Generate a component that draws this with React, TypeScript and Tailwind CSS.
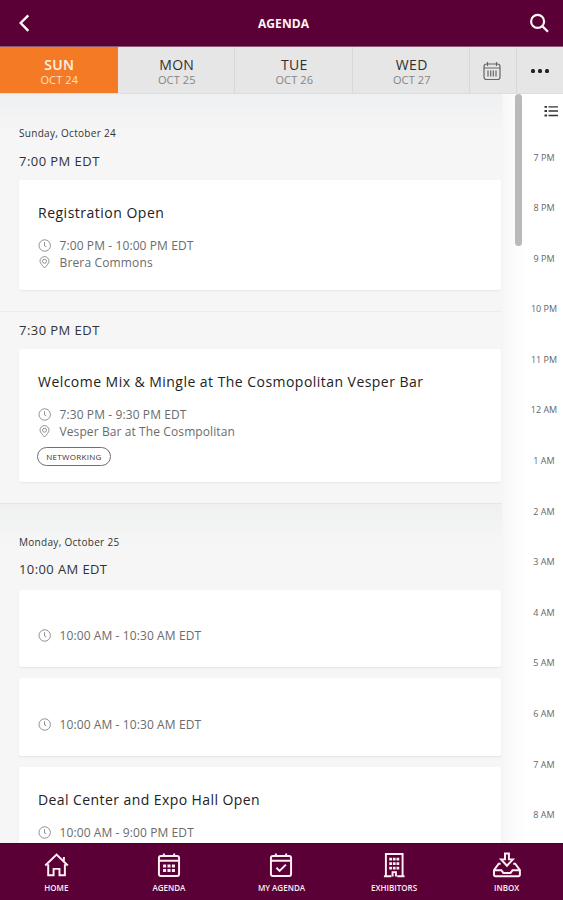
import React from 'react';

interface Session {
  title?: string;
  titleClass?: string;
  time: string;
  timeClass: string;
  location?: string;
  locationClass?: string;
  tag?: string;
  cardClass: string;
}

interface Slot {
  time: string;
  timeClass: string;
  slotClass: string;
  sessions: Session[];
}

interface Day {
  date: string;
  slots: Slot[];
}

const tabs = [
  { day: 'SUN', date: 'OCT 24', active: true },
  { day: 'MON', date: 'OCT 25' },
  { day: 'TUE', date: 'OCT 26' },
  { day: 'WED', date: 'OCT 27' },
];

const hours = [
  '7 PM', '8 PM', '9 PM', '10 PM', '11 PM', '12 AM', '1 AM',
  '2 AM', '3 AM', '4 AM', '5 AM', '6 AM', '7 AM', '8 AM',
];

const days: Day[] = [
  {
    date: 'Sunday, October 24',
    slots: [
      {
        time: '7:00 PM EDT',
        timeClass: 'mb-[9px] tracking-[0.45px]',
        slotClass: 'pt-[9px] pb-[21px]',
        sessions: [
          {
            title: 'Registration Open',
            titleClass: 'tracking-[0.5px]',
            time: '7:00 PM - 10:00 PM EDT',
            timeClass: 'tracking-[0.1px]',
            location: 'Brera Commons',
            locationClass: 'tracking-[0.15px]',
            cardClass: 'h-[110px] pt-[23px]',
          },
        ],
      },
      {
        time: '7:30 PM EDT',
        timeClass: 'mb-[9px] tracking-[0.45px]',
        slotClass: 'border-t border-[#ececec] pt-[8px] pb-[21px]',
        sessions: [
          {
            title: 'Welcome Mix & Mingle at The Cosmopolitan Vesper Bar',
            titleClass: 'tracking-[0.46px]',
            time: '7:30 PM - 9:30 PM EDT',
            timeClass: 'tracking-[0.1px]',
            location: 'Vesper Bar at The Cosmpolitan',
            locationClass: 'tracking-[0.1px]',
            tag: 'NETWORKING',
            cardClass: 'h-[133px] pt-[23px]',
          },
        ],
      },
    ],
  },
  {
    date: 'Monday, October 25',
    slots: [
      {
        time: '10:00 AM EDT',
        timeClass: 'mb-[11px] tracking-[0.4px]',
        slotClass: 'pt-[8px] pb-[21px]',
        sessions: [
          { time: '10:00 AM - 10:30 AM EDT', timeClass: 'tracking-[0.1px]', cardClass: 'h-[77px] pt-[37px]' },
          { time: '10:00 AM - 10:30 AM EDT', timeClass: 'tracking-[0.1px]', cardClass: 'h-[78px] pt-[38px]' },
          {
            title: 'Deal Center and Expo Hall Open',
            titleClass: 'tracking-[0.42px]',
            time: '10:00 AM - 9:00 PM EDT',
            timeClass: 'tracking-[0.1px]',
            cardClass: 'h-[110px] pt-[23px]',
          },
        ],
      },
    ],
  },
];

const ClockIcon = () => (
  <svg className="h-[13px] w-[13px] shrink-0" viewBox="0 0 13 13" fill="none" stroke="#858585" strokeWidth="0.9">
    <circle cx="6.7" cy="6.5" r="5.7" />
    <path d="M6.5 3.2v3.7l1.8.9" />
  </svg>
);

const PinIcon = () => (
  <svg className="h-[13px] w-[13px] shrink-0" viewBox="0 0 13 13" fill="none" stroke="#858585" strokeWidth="0.9">
    <path d="M6.5 12C4.4 9.5 2 7.3 2 5.1a4.5 4.5 0 0 1 9 0C11 7.3 8.6 9.5 6.5 12z" />
    <circle cx="6.5" cy="5.2" r="2" />
  </svg>
);

const CalendarIcon = () => (
  <svg className="h-5 w-[18px]" viewBox="0 0 18 20" fill="none" stroke="#666" strokeWidth="1.2">
    <rect x="1" y="3" width="16" height="15.5" rx="2.5" />
    <path d="M1 7h16M4.5 1v4M13.5 1v4" />
    <path d="M5 9.5v6M7.7 9.5v6M10.3 9.5v6M13 9.5v6" />
  </svg>
);

const navItems = [
  {
    label: 'HOME',
    icon: <path d="M2.3 13.7 13.8 2.7l11.5 11M21.3 9V5.2M5.3 12.5v11.3h5.5v-6.6h6v6.6h5.5V12.5" />,
  },
  {
    label: 'AGENDA',
    icon: (
      <>
        <rect x="3" y="4" width="20.5" height="20.5" rx="2" />
        <path d="M3 9h20.5M8 1.5V5M18.5 1.5V5" />
        <path d="M7.2 14.2h3.1M11.7 14.2h3.1M16.2 14.2h3.1M7.2 18.8h3.1M11.7 18.8h3.1M16.2 18.8h3.1" strokeWidth="3" />
      </>
    ),
  },
  {
    label: 'MY AGENDA',
    icon: (
      <>
        <rect x="3" y="4" width="20.5" height="20.5" rx="2" />
        <path d="M3 9h20.5M8 1.5V5M18.5 1.5V5M8.6 16l3.2 3.3 6.4-6.4" />
      </>
    ),
  },
  {
    label: 'EXHIBITORS',
    icon: (
      <>
        <path d="M5 24V2h17v22M3 24.7h7.5M16.5 24.7H24M11.8 25v-4.5h3.4V25" />
        <path d="M8.4 7.2h2.8M12.1 7.2h2.8M15.8 7.2h2.8M8.4 11.8h2.8M12.1 11.8h2.8M15.8 11.8h2.8M8.4 16.4h2.8M12.1 16.4h2.8M15.8 16.4h2.8" strokeWidth="2.8" />
      </>
    ),
  },
  {
    label: 'INBOX',
    icon: (
      <>
        <path d="M11.2 1.5h4v6h4L13.2 14 7.2 7.5h4z" />
        <path d="M6.8 12H4.8L0 18.5V23a1.7 1.7 0 0 0 1.7 1.7h23A1.7 1.7 0 0 0 26.4 23v-4.5L21.6 12h-2M0 18.5h7.5l2 2.8h7.4l2-2.8h7.5" />
      </>
    ),
  },
];

const SessionCard: React.FC<{ session: Session }> = ({ session }) => (
  <div className={`rounded-[2px] bg-white pl-[19px] shadow-[0_1px_2px_rgba(0,0,0,0.07)] ${session.cardClass}`}>
    {session.title && (
      <h3 className={`mb-[14px] text-[14px] leading-5 whitespace-nowrap text-[#222] ${session.titleClass}`}>{session.title}</h3>
    )}
    <div className="flex h-[17px] items-center gap-[8.5px]">
      <ClockIcon />
      <span className={`text-[12px] whitespace-nowrap text-[#6b6b6b] ${session.timeClass}`}>{session.time}</span>
    </div>
    {session.location && (
      <div className="flex h-[17px] items-center gap-[8.5px]">
        <PinIcon />
        <span className={`text-[12px] whitespace-nowrap text-[#6b6b6b] ${session.locationClass}`}>{session.location}</span>
      </div>
    )}
    {session.tag && (
      <div className="mt-[7px] -ml-px flex h-[19px] w-[74px] items-center justify-center rounded-full border border-[#707070] text-[8px] tracking-[0.3px] text-[#333]">
        {session.tag}
      </div>
    )}
  </div>
);

const App: React.FC = () => {
  return (
    <div className="flex h-[900px] w-[563px] flex-col overflow-hidden bg-[#f6f6f6] font-['Open_Sans',sans-serif]">
      <header className="flex h-[47px] shrink-0 items-center border-b border-[#8b5874] bg-[#5b0037] text-[#fff5f6]">
        <div className="flex flex-1 pl-[18px]">
          <svg className="h-5 w-3" viewBox="0 0 12 20" fill="none" stroke="currentColor" strokeWidth="2.4">
            <path d="M10.3 2.3 2.7 10l7.6 7.8" />
          </svg>
        </div>
        <h1 className="pt-[2px] text-[12px] font-bold tracking-[0.1px]">AGENDA</h1>
        <div className="flex flex-1 justify-end pr-[14px]">
          <svg className="h-5 w-5" viewBox="0 0 20 20" fill="none" stroke="currentColor" strokeWidth="2.2">
            <circle cx="8.6" cy="8.4" r="6.5" />
            <path d="m13.3 13.1 5.7 5.7" />
          </svg>
        </div>
      </header>

      <nav className="flex h-[47px] shrink-0 border-b border-[#dedede] bg-[#e6e6e6]">
        {tabs.map((tab) => (
          <div
            key={tab.day}
            className={`flex w-[117.5px] flex-col items-center border-r pt-[8px] pl-[2px] ${
              tab.active ? 'border-[#f47a25] bg-[#f47a25] text-[#fff3e8]' : 'border-[#d8d8d8] text-[#303030]'
            }`}
          >
            <span className={`text-[14px] leading-[19px] tracking-[0.3px] ${tab.active ? 'font-semibold' : 'font-medium'}`}>{tab.day}</span>
            <span className={`text-[11px] leading-[11px] tracking-[0.1px] ${tab.active ? 'text-[#ffe0c4]' : 'text-[#858585]'}`}>{tab.date}</span>
          </div>
        ))}
        <div className="flex w-[47px] items-center justify-center border-r border-[#d8d8d8] pt-[2px] pr-[2px]">
          <CalendarIcon />
        </div>
        <div className="flex flex-1 items-center justify-center gap-[3px] pt-px">
          <i className="h-[4px] w-[4px] rounded-[1.5px] bg-[#222]" />
          <i className="h-[4px] w-[4px] rounded-[1.5px] bg-[#222]" />
          <i className="h-[4px] w-[4px] rounded-[1.5px] bg-[#222]" />
        </div>
      </nav>

      <div className="flex min-h-0 flex-1">
        <main className="w-[502px] shrink-0 overflow-hidden">
          {days.map((day, index) => (
            <section
              key={day.date}
              className={`bg-linear-to-b from-[#eff0f1] to-[#f6f6f6] to-[40px] ${index > 0 ? 'border-t border-[#e6e6e6] pt-[30px]' : 'pt-[31px]'}`}
            >
              <h2 className="pl-[19px] text-[10px] leading-[17px] tracking-[0.3px] text-[#333]">{day.date}</h2>
              {day.slots.map((slot) => (
                <div key={slot.time} className={slot.slotClass}>
                  <div className={`pl-[19px] text-[13px] leading-5 text-[#333] ${slot.timeClass}`}>{slot.time}</div>
                  <div className="flex flex-col gap-[11px] pr-px pl-[19px]">
                    {slot.sessions.map((session, i) => (
                      <SessionCard key={i} session={session} />
                    ))}
                  </div>
                </div>
              ))}
            </section>
          ))}
        </main>
        <div className="w-[13px] shrink-0 bg-linear-to-r from-[#f6f6f6] to-[#fcfcfc]" />
        <aside className="flex flex-1 bg-linear-to-r from-[#fcfcfc] to-white to-[12px]">
          <div className="h-[152px] w-[7px] rounded-full bg-[#bababa]" />
          <div className="flex flex-1 flex-col">
            <svg className="mt-[11px] ml-[22px] h-3 w-[14px]" viewBox="0 0 14 12" fill="none" stroke="#333" strokeWidth="1.8">
              <path d="M0.5 1.8H3M0.5 6H3M0.5 10.5H3" />
              <path d="M4.5 1.8H14M4.5 6H14M4.5 10.5H14" strokeWidth="1.3" />
            </svg>
            <ul className="mt-[15.5px]">
              {hours.map((hour) => (
                <li key={hour} className="flex h-[50.6px] items-start justify-center pl-[3px] text-[9px] leading-[50.6px] text-[#666]">
                  {hour}
                </li>
              ))}
            </ul>
          </div>
        </aside>
      </div>

      <footer className="flex h-[57px] shrink-0 border-t border-[#3e0818] bg-[#5b0037] text-[#fff0f2]">
        {navItems.map((item) => (
          <div key={item.label} className="flex flex-1 flex-col items-center pt-[8px]">
            <svg className="h-[26px] w-[26px] overflow-visible" viewBox="0 0 26.5 26.5" fill="none" stroke="currentColor" strokeWidth="2">
              {item.icon}
            </svg>
            <span className="mt-[4px] text-[8px] leading-3 font-semibold">{item.label}</span>
          </div>
        ))}
      </footer>
    </div>
  );
};

export default App;
